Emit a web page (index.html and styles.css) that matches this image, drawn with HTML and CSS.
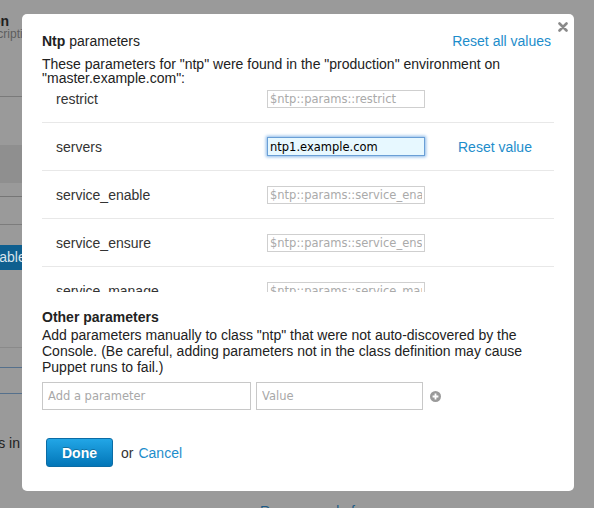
FILE: index.html
```html
<!DOCTYPE html>
<html>
<head>
<meta charset="utf-8">
<link rel="stylesheet" href="styles.css">
</head>
<body>
<div class="page">
  <div class="bg-col">
    <div class="bg-h"><span>Classification</span></div>
    <div class="bg-sub"><span>Description</span></div>
    <div class="bg-rule bg-r1"></div>
    <div class="bg-band"></div>
    <div class="bg-rule bg-r2"></div>
    <div class="bg-rule bg-r3"></div>
    <div class="bg-btn">Disable</div>
    <div class="bg-rule bg-r4"></div>
    <div class="bg-rule bg-blue bg-r5"></div>
    <div class="bg-rule bg-blue bg-r6"></div>
    <div class="bg-text"><span>groups in</span></div>
  </div>
  <div class="bg-foot">Remove node from</div>
</div>

<div class="modal">
  <div class="modal-head">
    <h3 class="modal-title"><b>Ntp</b> parameters</h3>
    <a class="link" href="#">Reset all values</a>
  </div>
  <a class="close" href="#" aria-label="Close">
    <svg width="10" height="10" viewBox="0 0 10 10"><path d="M1.5 1.5 L8.5 8.5 M8.5 1.5 L1.5 8.5" stroke="#8a8a8a" stroke-width="2.6" stroke-linecap="round"/></svg>
  </a>
  <p class="desc">These parameters for "ntp" were found in the "production" environment on<br>"master.example.com":</p>

  <div class="scroll">
    <div class="rows">
      <div class="row">
        <span class="row-label">restrict</span>
        <input class="row-input" type="text" placeholder="$ntp::params::restrict">
      </div>
      <div class="row">
        <span class="row-label">servers</span>
        <input class="row-input is-focused" type="text" value="ntp1.example.com">
        <a class="link row-reset" href="#">Reset value</a>
      </div>
      <div class="row">
        <span class="row-label">service_enable</span>
        <input class="row-input" type="text" placeholder="$ntp::params::service_enable">
      </div>
      <div class="row">
        <span class="row-label">service_ensure</span>
        <input class="row-input" type="text" placeholder="$ntp::params::service_ensure">
      </div>
      <div class="row">
        <span class="row-label">service_manage</span>
        <input class="row-input" type="text" placeholder="$ntp::params::service_manage">
      </div>
    </div>
  </div>

  <h4 class="other-title">Other parameters</h4>
  <p class="other-desc">Add parameters manually to class "ntp" that were not auto-discovered by the<br>Console. (Be careful, adding parameters not in the class definition may cause<br>Puppet runs to fail.)</p>

  <div class="add-row">
    <input class="add-input add-name" type="text" placeholder="Add a parameter">
    <input class="add-input add-value" type="text" placeholder="Value">
    <svg class="add-icon" width="11" height="11" viewBox="0 0 11 11"><circle cx="5.5" cy="5.5" r="5.5" fill="#9a9a9a"/><path d="M5.5 2.6 V8.4 M2.6 5.5 H8.4" stroke="#fff" stroke-width="1.8"/></svg>
  </div>

  <div class="actions">
    <button class="btn-done" type="button">Done</button>
    <span class="or">or</span>
    <a class="link cancel" href="#">Cancel</a>
  </div>
</div>
</body>
</html>
```

FILE: styles.css
```css
* { box-sizing: border-box; margin: 0; padding: 0; }
html, body { width: 594px; height: 508px; overflow: hidden; }
body {
  background: #9a9a9a;
  font-family: "Liberation Sans", Arial, sans-serif;
  font-size: 14px;
  color: #333;
  position: relative;
}

/* ---- dimmed page behind the dialog ---- */
.page { height: 508px; overflow: hidden; }
.bg-col { width: 60px; }
.bg-h, .bg-sub, .bg-text {
  width: 9px;
  display: flex;
  justify-content: flex-end;
  white-space: nowrap;
}
.bg-h { margin-top: 14px; line-height: 14px; font-weight: bold; color: #1f1f1f; font-size: 14px; }
.bg-sub { width: 40px; justify-content: flex-start; margin-left: -24px; line-height: 12px; font-size: 12px; color: #5e5e5e; }
.bg-rule { height: 1px; background: #7a7a7a; }
.bg-r1 { margin-top: 56px; }
.bg-band { margin-top: 48px; height: 38px; background: #8f8f8f; }
.bg-r2 { margin-top: 13px; background: #767676; }
.bg-r3 { margin-top: 27px; background: #7c7c7c; }
.bg-btn {
  margin-top: 20px;
  margin-left: -40px;
  width: 100px;
  height: 25px;
  padding-left: 19px;
  line-height: 25px;
  background: #0f5f8f;
  color: #d8e4ec;
  font-size: 14px;
}
.bg-r4 { margin-top: 77px; background: #8a8a8a; }
.bg-blue { background: #55708c; }
.bg-r5 { margin-top: 19px; }
.bg-r6 { margin-top: 25px; }
.bg-text { width: 20px; margin-top: 41px; line-height: 16px; color: #222; }
.bg-foot { margin-top: 52px; margin-left: 260px; color: #1c5a86; font-size: 14px; line-height: 16px; }

/* ---- dialog ---- */
.modal {
  position: absolute;
  left: 22px;
  top: 14px;
  width: 552px;
  height: 477px;
  background: #fff;
  border-radius: 5px;
  padding: 19px 23px 0 20px;
}
.modal-head {
  display: flex;
  justify-content: space-between;
  align-items: baseline;
  line-height: 16px;
}
.modal-title { font-size: 14px; font-weight: normal; color: #222; }
.modal-title b { font-weight: bold; }
.link { color: #1d8dcb; text-decoration: none; }
.close {
  position: absolute;
  right: 6px;
  top: 8px;
  display: block;
  width: 10px;
  height: 10px;
}
.close svg { display: block; }
.desc { margin-top: 8px; line-height: 14px; color: #222; }

.scroll {
  margin-top: 1px;
  width: 512px;
  height: 206px;
  overflow: hidden;
}
.rows { margin-top: -11px; }
.row {
  height: 48px;
  border-bottom: 1px solid #e8e8e8;
  display: flex;
  align-items: center;
  padding-left: 14px;
}
.row-label { width: 211px; color: #333; }
.row-input {
  width: 158px;
  height: 18px;
  border: 1px solid #cfcfcf;
  padding: 0 2px;
  font-family: "DejaVu Sans", sans-serif;
  font-size: 11.5px;
  color: #111;
  background: #fff;
  outline: none;
}
.row-input::placeholder { color: #aaa; }
.row-input.is-focused {
  height: 19px;
  border: 1px solid #6a9fd6;
  background: #e7f8ff;
  box-shadow: 0 0 3px 1px #8ab9e8;
  color: #000;
}
.row-reset { margin-left: 33px; }

.other-title { margin-top: 17px; font-size: 14px; line-height: 16px; color: #222; font-weight: bold; }
.other-desc { margin-top: 2px; line-height: 16px; color: #222; }

.add-row {
  margin-top: 7px;
  display: flex;
  align-items: center;
  gap: 5px;
}
.add-input {
  height: 28px;
  border: 1px solid #c8c8c8;
  padding: 0 5px;
  font-family: "DejaVu Sans", sans-serif;
  font-size: 11.5px;
  color: #111;
  outline: none;
}
.add-input::placeholder { color: #a8a8a8; }
.add-name { width: 209px; }
.add-value { width: 167px; }
.add-icon { margin-left: 2px; display: block; }

.actions {
  margin-top: 28px;
  margin-left: 4px;
  display: flex;
  align-items: center;
}
.btn-done {
  width: 67px;
  height: 29px;
  border: 1px solid #0b6ca5;
  border-radius: 3px;
  background: linear-gradient(#22a6e6, #0276b8);
  color: #fff;
  font-family: "Liberation Sans", Arial, sans-serif;
  font-size: 14px;
  font-weight: bold;
  text-shadow: 0 -1px 0 rgba(0,0,0,0.25);
}
.or { margin-left: 8px; color: #333; }
.cancel { margin-left: 5px; }
```
